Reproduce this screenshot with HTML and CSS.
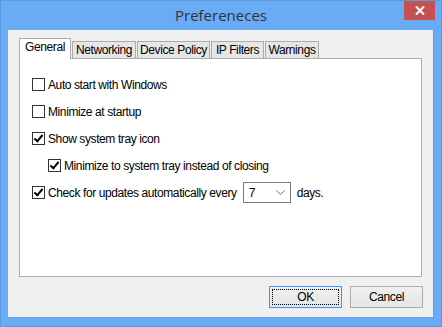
FILE: index.html
```html
<!DOCTYPE html>
<html lang="en">
<head>
    <meta charset="UTF-8">
    <title>Prefereneces</title>
    <link rel="stylesheet" href="styles.css">
</head>
<body>

    <div class="window">
        <div class="titlebar">
            <span></span>
            <span class="title">Prefereneces</span>
            <span class="close">
                <svg width="10" height="9" viewBox="0 0 10 9">
                    <path d="M1 0.5 L9 8.5 M9 0.5 L1 8.5" stroke="#ffffff" stroke-width="2" fill="none"/>
                </svg>
            </span>
        </div>

        <div class="client">
            <div class="tabs">
                <div class="tab active tab-general">General</div>
                <div class="tab tab-networking">Networking</div>
                <div class="tab tab-device">Device Policy</div>
                <div class="tab tab-ip">IP Filters</div>
                <div class="tab tab-warnings">Warnings</div>
            </div>

            <div class="panel">
                <div class="row">
                    <span class="box"></span>
                    <span>Auto start with Windows</span>
                </div>
                <div class="row">
                    <span class="box"></span>
                    <span>Minimize at startup</span>
                </div>
                <div class="row">
                    <span class="box checked"></span>
                    <span>Show system tray icon</span>
                </div>
                <div class="row sub">
                    <span class="box checked"></span>
                    <span>Minimize to system tray instead of closing</span>
                </div>
                <div class="row">
                    <span class="box checked"></span>
                    <span>Check for updates automatically every</span>
                    <span class="select">
                        <span>7</span>
                        <svg width="9" height="5" viewBox="0 0 9 5">
                            <path d="M0.5 0.5 L4.5 4.5 L8.5 0.5" stroke="#707070" stroke-width="1" fill="none"/>
                        </svg>
                    </span>
                    <span>days.</span>
                </div>
            </div>

            <div class="buttons">
                <div class="btn default"><span class="focus">OK</span></div>
                <div class="btn">Cancel</div>
            </div>
        </div>
    </div>

</body>
</html>
```

FILE: styles.css
```css
body {
    margin: 0;
    font-family: "Liberation Sans", Arial, sans-serif;
    font-size: 12px;
    letter-spacing: -0.4px;
    color: #000000;
    background-color: #ffffff;
}

.window {
    width: 442px;
    height: 327px;
    box-sizing: border-box;
    background-color: #6aabf5;
    border: 1px solid #5b98dc;
    display: flex;
    flex-direction: column;
    align-items: center;
}

.titlebar {
    width: 440px;
    height: 29px;
    display: grid;
    grid-template-columns: 1fr auto 1fr;
}

.title {
    font-family: "Open Sans", "Noto Sans", sans-serif;
    font-size: 15px;
    letter-spacing: 0;
    color: #333333;
    line-height: 29px;
}

.close {
    justify-self: end;
    width: 31px;
    height: 19px;
    margin-right: 6px;
    background-color: #c75050;
    display: flex;
    align-items: center;
    justify-content: center;
}

.client {
    width: 426px;
    height: 288px;
    box-sizing: border-box;
    background-color: #f0f0f0;
    border-right: 1px solid #5f9fe4;
    border-bottom: 1px solid #5f9fe4;
    padding: 8px 11px 0 11px;
    display: flex;
    flex-direction: column;
}

.tabs {
    display: flex;
    align-items: flex-end;
    gap: 1px;
    height: 20px;
}

.tab {
    box-sizing: border-box;
    height: 17px;
    border: 1px solid #acacac;
    border-bottom: none;
    background-color: #e6e6e6;
    text-align: center;
    line-height: 16px;
    white-space: nowrap;
}

.tab.active {
    height: 21px;
    margin-bottom: -1px;
    background-color: #ffffff;
    line-height: 17px;
    position: relative;
    z-index: 1;
}

.tab-general { width: 52px; }
.tab-networking { width: 64px; }
.tab-device { width: 73px; }
.tab-ip { width: 53px; }
.tab-warnings { width: 54px; }

.panel {
    width: 403px;
    height: 219px;
    box-sizing: border-box;
    background-color: #ffffff;
    border: 1px solid #acacac;
    padding: 15px 12px 0 12px;
    display: flex;
    flex-direction: column;
    gap: 6px;
}

.row {
    height: 21px;
    display: flex;
    align-items: center;
    gap: 3px;
    white-space: nowrap;
}

.row.sub {
    padding-left: 16px;
}

.box {
    width: 13px;
    height: 13px;
    box-sizing: border-box;
    border: 1px solid #333333;
    background-color: #ffffff;
    flex-shrink: 0;
    position: relative;
}

.box.checked::after {
    content: "";
    position: absolute;
    left: 3px;
    top: 0px;
    width: 3px;
    height: 7px;
    border-right: 2px solid #000000;
    border-bottom: 2px solid #000000;
    transform: rotate(40deg);
}

.select {
    width: 48px;
    height: 21px;
    box-sizing: border-box;
    border: 1px solid #7a7a7a;
    background-color: #ffffff;
    margin: 0 3px 0 3px;
    padding: 0 5px 0 5px;
    display: flex;
    align-items: center;
    justify-content: space-between;
}

.buttons {
    display: flex;
    justify-content: flex-end;
    gap: 8px;
    margin-top: 9px;
    margin-right: -1px;
}

.btn {
    width: 73px;
    height: 22px;
    box-sizing: border-box;
    border: 1px solid #acacac;
    background: linear-gradient(#f0f0f0, #e5e5e5);
    display: flex;
    align-items: center;
    justify-content: center;
}

.btn.default {
    border-color: #3399ff;
    padding: 2px;
}

.focus {
    width: 100%;
    height: 100%;
    box-sizing: border-box;
    border: 1px dotted #000000;
    display: flex;
    align-items: center;
    justify-content: center;
}
```
